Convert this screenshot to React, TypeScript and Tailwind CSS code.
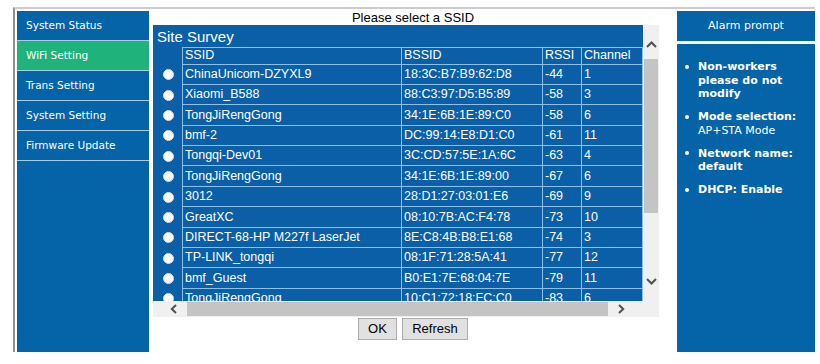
import React from "react";

const rows: [string, string, string, string][] = [
  ["ChinaUnicom-DZYXL9", "18:3C:B7:B9:62:D8", "-44", "1"],
  ["Xiaomi_B588", "88:C3:97:D5:B5:89", "-58", "3"],
  ["TongJiRengGong", "34:1E:6B:1E:89:C0", "-58", "6"],
  ["bmf-2", "DC:99:14:E8:D1:C0", "-61", "11"],
  ["Tongqi-Dev01", "3C:CD:57:5E:1A:6C", "-63", "4"],
  ["TongJiRengGong", "34:1E:6B:1E:89:00", "-67", "6"],
  ["3012", "28:D1:27:03:01:E6", "-69", "9"],
  ["GreatXC", "08:10:7B:AC:F4:78", "-73", "10"],
  ["DIRECT-68-HP M227f LaserJet", "8E:C8:4B:B8:E1:68", "-74", "3"],
  ["TP-LINK_tongqi", "08:1F:71:28:5A:41", "-77", "12"],
  ["bmf_Guest", "B0:E1:7E:68:04:7E", "-79", "11"],
  ["TongJiRengGong", "10:C1:72:18:FC:C0", "-83", "6"],
];

const menu = ["System Status", "WiFi Setting", "Trans Setting", "System Setting", "Firmware Update"];

function Chevron({ dir }: { dir: "up" | "down" | "left" | "right" }) {
  if (dir === "up")
    return (
      <svg width="11" height="7" viewBox="0 0 11 7">
        <path d="M1 6 L5.5 1.5 L10 6" fill="none" stroke="#505050" strokeWidth="2" />
      </svg>
    );
  if (dir === "down")
    return (
      <svg width="11" height="7" viewBox="0 0 11 7">
        <path d="M1 1 L5.5 5.5 L10 1" fill="none" stroke="#505050" strokeWidth="2" />
      </svg>
    );
  if (dir === "left")
    return (
      <svg width="7" height="10" viewBox="0 0 7 10">
        <path d="M6 1 L1.8 5 L6 9" fill="none" stroke="#505050" strokeWidth="2" />
      </svg>
    );
  return (
    <svg width="7" height="10" viewBox="0 0 7 10">
      <path d="M1 1 L5.2 5 L1 9" fill="none" stroke="#505050" strokeWidth="2" />
    </svg>
  );
}

function Cells({ c, header }: { c: [string, string, string, string]; header?: boolean }) {
  return (
    <div
      className={`flex border-b border-[#8dc0e6] ${header ? "border-t h-[17.5px]" : "h-[20.4px]"}`}
    >
      <div className="w-[219px] border-l border-[#8dc0e6] pl-[2px] flex items-center whitespace-nowrap overflow-hidden">
        {c[0]}
      </div>
      <div className="w-[141px] border-l border-[#8dc0e6] pl-[2px] flex items-center whitespace-nowrap overflow-hidden">
        {c[1]}
      </div>
      <div className="w-[39px] border-l border-[#8dc0e6] pl-[2px] flex items-center whitespace-nowrap overflow-hidden">
        {c[2]}
      </div>
      <div className="w-[62px] border-l border-r border-[#8dc0e6] pl-[2px] flex items-center whitespace-nowrap overflow-hidden">
        {c[3]}
      </div>
    </div>
  );
}

export default function App() {
  return (
    <div className="w-[820px] h-[364px] bg-white overflow-hidden">
      <div className="ml-[13px] mt-[7px] w-[802px] h-[345px] border-l-2 border-t-2 border-l-[#8f8f8f] border-t-[#cccccc] pl-[2px] pt-[2px] flex">
        {/* Sidebar */}
        <div className="w-[132px] h-full bg-[#0563a8] flex flex-col font-['DejaVu_Sans',sans-serif] text-[10.5px] text-white">
          {menu.map((m) => (
            <div
              key={m}
              className={`h-[30px] border-b border-[#a8cbe6] pl-[9px] flex items-center ${
                m === "WiFi Setting" ? "bg-[#1fb37b]" : ""
              }`}
            >
              {m}
            </div>
          ))}
        </div>

        {/* Middle */}
        <div className="w-[528px] h-full flex flex-col font-['Liberation_Sans',Arial,sans-serif]">
          <div className="h-[14px] text-[13px] leading-[14px] text-black text-center">Please select a SSID</div>
          <div className="ml-[4px] w-[506px] h-[292px] bg-[#0a5fa6] flex flex-col text-white">
            <div className="flex h-[276px]">
              <div className="w-[490px] h-[276px] overflow-hidden">
                <div className="h-[22px] pl-[4px] text-[15px] leading-[22px] pt-[1px]">Site Survey</div>
                <div className="text-[12.5px]">
                  <div className="flex">
                    <div className="w-[29px]" />
                    <Cells c={["SSID", "BSSID", "RSSI", "Channel"]} header />
                  </div>
                  {rows.map((r, i) => (
                    <div key={i} className="flex">
                      <div className="w-[29px] flex items-center justify-center pl-[1px]">
                        <div className="w-[11px] h-[11px] rounded-full bg-white border border-[#dcdcdc]" />
                      </div>
                      <Cells c={r} />
                    </div>
                  ))}
                </div>
              </div>
              <div className="w-[16px] h-[276px] bg-[#f0f0f0] flex flex-col">
                <div className="h-[34px] flex items-center justify-center pt-[4px]">
                  <Chevron dir="up" />
                </div>
                <div className="h-[154px] mx-[1px] bg-[#c4c4c4]" />
                <div className="flex-1" />
                <div className="h-[40px] flex items-center justify-center">
                  <Chevron dir="down" />
                </div>
              </div>
            </div>
            <div className="flex h-[16px]">
              <div className="w-[490px] h-[16px] bg-[#f0f0f0] flex items-center">
                <div className="w-[34px] flex justify-end pr-[10px]">
                  <Chevron dir="left" />
                </div>
                <div className="w-[421px] h-[14px] bg-[#c4c4c4]" />
                <div className="flex-1 pl-[10px] flex">
                  <Chevron dir="right" />
                </div>
              </div>
              <div className="w-[16px] h-[16px] bg-[#f0f0f0]" />
            </div>
          </div>
          <div className="mt-[1px] flex justify-center gap-[5px]">
            <button className="w-[39px] h-[22px] bg-[#e1e1e1] border border-[#adadad] text-[13px] text-black">
              OK
            </button>
            <button className="w-[66px] h-[22px] bg-[#e1e1e1] border border-[#adadad] text-[13px] text-black">
              Refresh
            </button>
          </div>
        </div>

        {/* Right panel */}
        <div className="w-[138px] h-full flex flex-col font-['DejaVu_Sans',sans-serif] text-white">
          <div className="h-[30px] bg-[#0563a8] flex items-center justify-center text-[11px]">Alarm prompt</div>
          <div className="mt-[3px] flex-1 bg-[#0563a8] pt-[16px] pr-[4px] text-[11px] leading-[13.7px]">
            <ul className="flex flex-col gap-[9px]">
              {[
                <b key="a">Non-workers please do not modify</b>,
                <span key="b">
                  <b>Mode selection:</b>
                  <br />
                  AP+STA Mode
                </span>,
                <b key="c">Network name: default</b>,
                <b key="d">DHCP: Enable</b>,
              ].map((t, i) => (
                <li key={i} className="flex">
                  <div className="w-[21px] shrink-0 h-[13.7px] flex items-center pl-[8px]">
                    <div className="w-[4px] h-[4px] rounded-full bg-white" />
                  </div>
                  <div>{t}</div>
                </li>
              ))}
            </ul>
          </div>
        </div>
      </div>
    </div>
  );
}
